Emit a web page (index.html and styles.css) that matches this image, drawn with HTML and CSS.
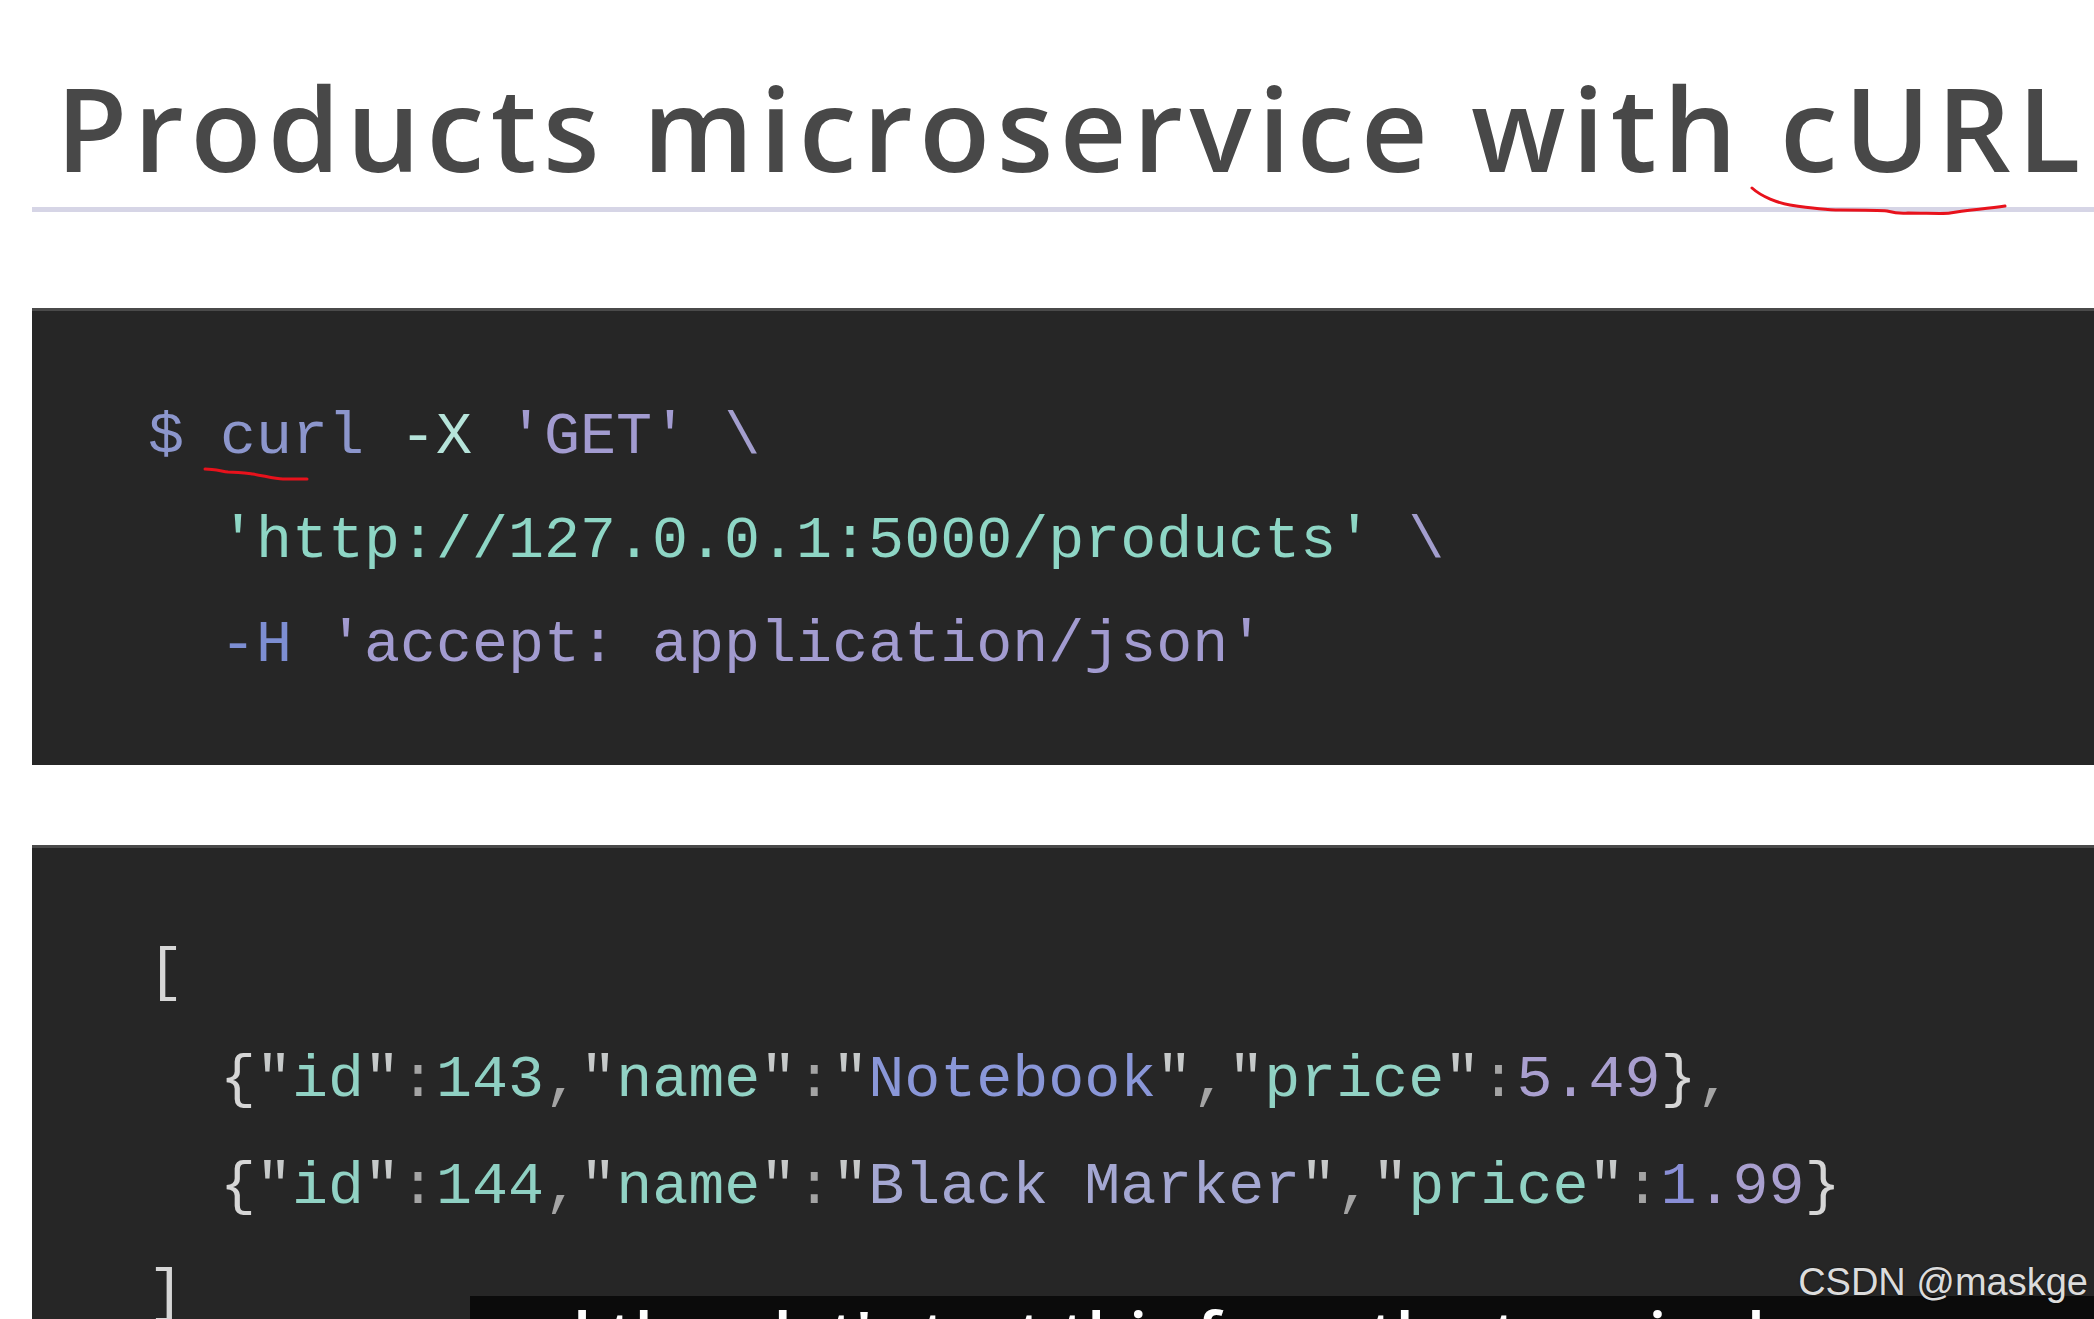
FILE: index.html
```html
<!DOCTYPE html>
<html>
<head>
<meta charset="utf-8">
<link rel="stylesheet" href="styles.css">
</head>
<body>
<div class="page">
  <header class="head">
    <h1 class="title">Products microservice with cURL</h1>
    <div class="rule"></div>
  </header>
  <pre class="code code-cmd"><span class="c-prompt">$ curl</span> <span class="c-flag">-X</span> <span class="c-str2">'GET'</span> <span class="c-bs">\</span>
  <span class="c-url">'http://127.0.0.1:5000/products'</span> <span class="c-bs">\</span>
  <span class="c-flag2">-H</span> <span class="c-str2">'accept: application/json'</span></pre>
  <pre class="code code-out"><span class="j-br">[</span>
  <span class="j-br">{</span><span class="j-q">"</span><span class="j-key">id</span><span class="j-q">"</span><span class="j-p">:</span><span class="j-num">143</span><span class="j-p">,</span><span class="j-q">"</span><span class="j-key">name</span><span class="j-q">"</span><span class="j-p">:</span><span class="j-q">"</span><span class="j-val">Notebook</span><span class="j-q">"</span><span class="j-p">,</span><span class="j-q">"</span><span class="j-key">price</span><span class="j-q">"</span><span class="j-p">:</span><span class="j-price">5.49</span><span class="j-br">}</span><span class="j-p">,</span>
  <span class="j-br">{</span><span class="j-q">"</span><span class="j-key">id</span><span class="j-q">"</span><span class="j-p">:</span><span class="j-num">144</span><span class="j-p">,</span><span class="j-q">"</span><span class="j-key">name</span><span class="j-q">"</span><span class="j-p">:</span><span class="j-q">"</span><span class="j-val2">Black Marker</span><span class="j-q">"</span><span class="j-p">,</span><span class="j-q">"</span><span class="j-key">price</span><span class="j-q">"</span><span class="j-p">:</span><span class="j-one">1</span><span class="j-price">.99</span><span class="j-br">}</span>
<span class="j-br">]</span></pre>
</div>

<svg class="mark mark-title" width="270" height="40" viewBox="0 0 270 40">
  <path d="M2 3 C 12 12, 28 18, 40 20 C 60 23, 80 25, 90 25 C 110 25, 130 25, 137 26 C 145 28, 150 29, 158 28 C 175 28, 195 29, 200 28 C 215 25, 235 24, 255 21" fill="none" stroke="#e8121c" stroke-width="3" stroke-linecap="round"/>
</svg>
<svg class="mark mark-curl" width="110" height="20" viewBox="0 0 110 20">
  <path d="M2 3 C 10 3, 18 5, 25 6 C 35 6, 42 7, 50 8 C 62 10, 72 13, 80 13 C 90 13, 98 13, 104 13" fill="none" stroke="#e8121c" stroke-width="3" stroke-linecap="round"/>
</svg>

<div class="subtitle"><span class="subtitle-text">and then let's test this from the terminal</span></div>
<div class="watermark">CSDN @maskge</div>
</body>
</html>
```

FILE: styles.css
```css
html, body {
  margin: 0;
  padding: 0;
  background: #ffffff;
}
body {
  width: 2094px;
  height: 1319px;
  overflow: hidden;
  position: relative;
  font-family: "Open Sans", "Liberation Sans", sans-serif;
}
.page {
  padding-left: 32px;
  display: flex;
  flex-direction: column;
}
.head {
  display: flex;
  flex-direction: column;
}
.title {
  margin: 0 0 0 24px;
  padding-top: 47px;
  font-family: "Open Sans", "Liberation Sans", sans-serif;
  font-weight: 600;
  font-size: 116px;
  line-height: 160px;
  height: 160px;
  color: #484848;
  white-space: nowrap;
  letter-spacing: 6.5px;
}
.rule {
  height: 5px;
  background: #d6d5e6;
}
.code {
  margin: 0;
  background: #262626;
  border-top: 3px solid #4a4a4a;
  font-family: "Liberation Mono", "DejaVu Sans Mono", monospace;
  font-size: 60px;
  padding-left: 116px;
  color: #cfcfcf;
  white-space: pre;
}
.code-cmd {
  margin-top: 96px;
  height: 457px;
  box-sizing: border-box;
  padding-top: 74px;
  line-height: 104px;
}
.code-out {
  margin-top: 80px;
  height: 600px;
  box-sizing: border-box;
  padding-top: 72px;
  line-height: 107px;
}
.c-prompt { color: #8c96cc; }
.c-flag { color: #b6e4da; }
.c-flag2 { color: #7d8ed2; }
.c-str2 { color: #a29bd0; }
.c-bs { color: #a39ece; }
.c-url { color: #8ed6c5; }

.j-br { color: #d6d6d6; }
.j-q { color: #c6c9c9; }
.j-key { color: #91d2c4; }
.j-p { color: #a4a4a4; }
.j-num { color: #8fd0c3; }
.j-val { color: #8a97d8; }
.j-val2 { color: #a4a7d2; }
.j-price { color: #a99fcf; }
.j-one { color: #8a8fd6; }

.mark {
  position: absolute;
}
.mark-title {
  left: 1750px;
  top: 185px;
}
.mark-curl {
  left: 203px;
  top: 466px;
}
.subtitle {
  position: absolute;
  left: 470px;
  top: 1296px;
  right: 0;
  bottom: 0;
  background: #0b0b0b;
  overflow: hidden;
}
.subtitle-text {
  display: block;
  margin-top: 4px;
  padding-left: 0;
  font-family: "Open Sans", sans-serif;
  font-weight: 600;
  font-size: 66px;
  line-height: 66px;
  color: #ffffff;
  white-space: nowrap;
}
.watermark {
  position: absolute;
  right: 6px;
  top: 1260px;
  font-family: "Liberation Sans", sans-serif;
  font-size: 38px;
  line-height: 44px;
  color: #dcdcdc;
  text-shadow: 0 0 2px rgba(0,0,0,0.6);
}
```
